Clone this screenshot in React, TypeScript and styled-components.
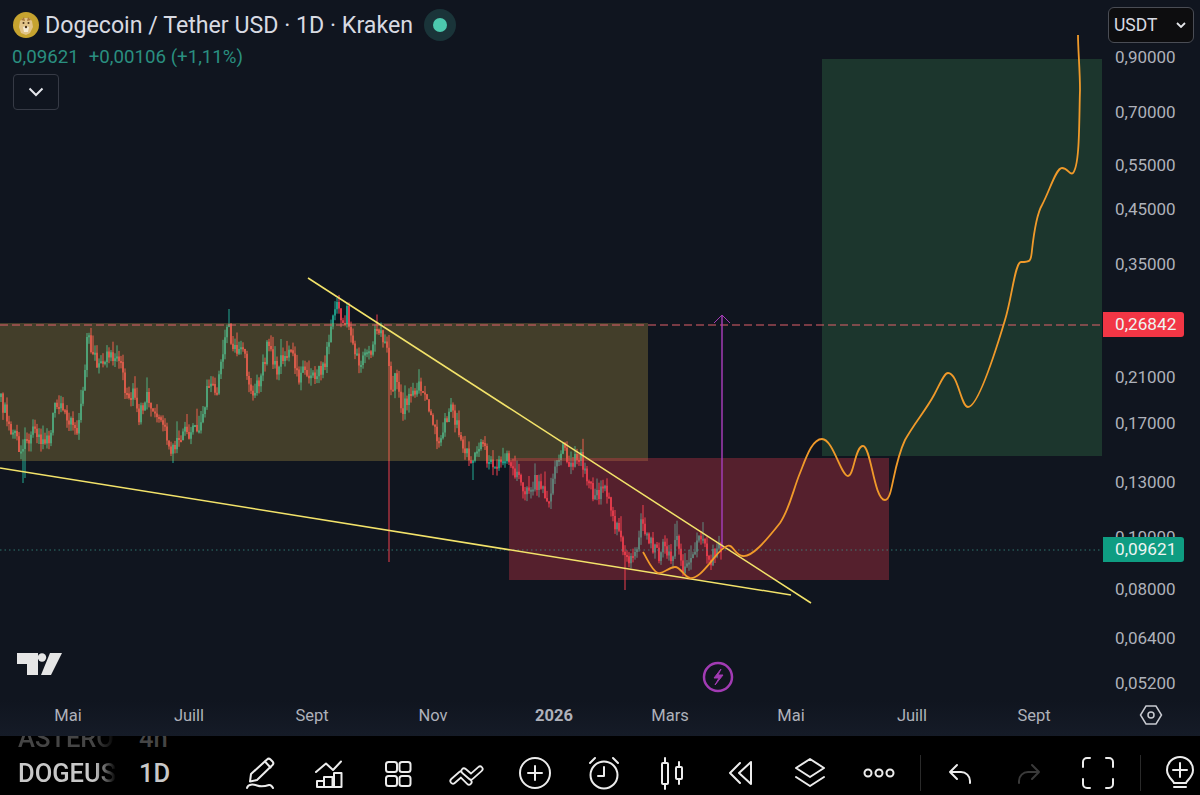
import React from 'react';
import styled, { createGlobalStyle } from 'styled-components';

const GlobalStyle = createGlobalStyle`
  html, body {
    margin: 0;
    padding: 0;
    background: #000;
    font-family: Roboto, "Liberation Sans", sans-serif;
  }
`;

const Page = styled.div`
  width: 1200px;
  height: 795px;
  display: flex;
  flex-direction: column;
  overflow: hidden;
  background: #000;
`;

const ChartArea = styled.div`
  position: relative;
  height: 736px;
  flex: none;
  display: grid;
  grid-template-columns: 1102px 98px;
  grid-template-rows: 700px 36px;
  background: #10151f;
  color: #b2b5be;
`;

const Plot = styled.svg`
  display: block;
  width: 1102px;
  height: 700px;
`;

const Legend = styled.div`
  position: absolute;
  left: 13px;
  top: 9px;
  display: flex;
  flex-direction: column;
`;

const TitleRow = styled.div`
  display: flex;
  align-items: center;
  height: 32px;
`;

const Title = styled.span`
  margin-left: 6px;
  font-size: 23.2px;
  color: #d8dae2;
  white-space: nowrap;
`;

const StatusHalo = styled.span`
  margin-left: 11px;
  width: 32px;
  height: 32px;
  border-radius: 50%;
  background: #1a3439;
  display: flex;
  align-items: center;
  justify-content: center;

  &::after {
    content: '';
    width: 14px;
    height: 14px;
    border-radius: 50%;
    background: #4cc9ae;
  }
`;

const Quote = styled.div`
  display: flex;
  gap: 10px;
  margin: 3px 0 0 -1px;
  font-size: 18.7px;
  line-height: 26px;
  color: #2a8f80;
`;

const CollapseButton = styled.div`
  width: 44px;
  height: 34px;
  margin-top: 4px;
  border: 1px solid #363a45;
  border-radius: 4px;
  display: flex;
  align-items: center;
  justify-content: center;
  color: #e4e6eb;
`;

const Brand = styled.svg`
  position: absolute;
  left: 17px;
  top: 653px;
  width: 45px;
  height: 22px;
`;

const BoltButton = styled.svg`
  position: absolute;
  left: 702px;
  top: 661px;
  width: 32px;
  height: 32px;
`;

const PriceAxis = styled.div`
  position: relative;
`;

const CurrencySelect = styled.div`
  position: absolute;
  left: 6px;
  top: 7px;
  width: 86px;
  height: 36px;
  box-sizing: border-box;
  padding: 0 7px 0 5px;
  display: flex;
  align-items: center;
  justify-content: space-between;
  background: #0d0d0f;
  border: 1px solid #4a4d55;
  border-radius: 6px;
  font-size: 17.5px;
  color: #d8dae2;
`;

const PriceTick = styled.span<{ $y: number }>`
  position: absolute;
  left: 13px;
  top: ${(p) => p.$y}px;
  transform: translateY(-50%);
  font-size: 17px;
  line-height: 20px;
  color: #aeb1ba;
`;

const PriceBadge = styled.span<{ $y: number; $bg: string }>`
  position: absolute;
  left: 1px;
  top: ${(p) => p.$y}px;
  width: 81px;
  height: 25px;
  box-sizing: border-box;
  padding-left: 12px;
  background: ${(p) => p.$bg};
  border-radius: 0 3px 3px 0;
  font-size: 17.2px;
  line-height: 24px;
  color: #eef5f2;
`;

const TimeAxis = styled.div`
  grid-column: 1 / 3;
  position: relative;
  background: linear-gradient(#10151f, #151b27);
`;

const TimeTick = styled.span<{ $x: number; $bold?: boolean }>`
  position: absolute;
  left: ${(p) => p.$x}px;
  top: 5px;
  transform: translateX(-50%);
  font-size: 16.5px;
  line-height: 21px;
  font-weight: ${(p) => (p.$bold ? 700 : 400)};
  color: #aeb1ba;
`;

const AxisSettings = styled.svg`
  position: absolute;
  left: 1139px;
  top: 3px;
  width: 24px;
  height: 24px;
`;

const Toolbar = styled.div`
  flex: 1;
  display: flex;
  align-items: flex-end;
  padding-bottom: 4px;
  min-height: 0;
  overflow: hidden;
`;

const SymbolList = styled.div`
  width: 226px;
  flex: none;
  height: 55px;
  box-sizing: border-box;
  padding: 0 0 1px 18px;
  display: flex;
  flex-direction: column;
  justify-content: flex-end;
  overflow: hidden;
`;

const SymbolRow = styled.div<{ $dim?: boolean }>`
  display: flex;
  flex: none;
  height: 35px;
  align-items: center;
  font-size: 25.5px;
  font-weight: 500;
  color: ${(p) => (p.$dim ? '#454545' : '#c8c8c8')};
`;

const SymbolName = styled.span`
  width: 98px;
  overflow: hidden;
  white-space: nowrap;
  -webkit-mask-image: linear-gradient(90deg, #000 78%, transparent);
  mask-image: linear-gradient(90deg, #000 78%, transparent);
`;

const SymbolInterval = styled.span`
  margin-left: 23px;
`;

const ToolButton = styled.div<{ $off?: boolean }>`
  width: 68.7px;
  height: 36px;
  flex: none;
  display: flex;
  align-items: center;
  justify-content: center;
  color: ${(p) => (p.$off ? '#3a3a3a' : '#ececec')};
`;

const ToolDivider = styled.div<{ $gap: number }>`
  width: 1px;
  height: 36px;
  flex: none;
  margin: 0 5px 0 ${(p) => p.$gap}px;
  background: #2a2a2a;
`;

const Glyph = styled.svg`
  display: block;
  width: 36px;
  height: 36px;
  fill: none;
  overflow: visible;
  stroke: currentColor;
  stroke-width: 2;
  stroke-linecap: round;
  stroke-linejoin: round;
`;

// candle data: closes follow the hand-read shape of the chart, noise on top
const shape: [number, number][] = [
  [0, 397], [10, 425], [20, 450], [33, 430], [40, 443], [50, 440], [53, 410], [58, 405], [67, 420], [78, 427],
  [83, 390], [87, 337], [93, 353], [100, 370], [108, 352], [113, 363], [120, 360], [127, 397], [133, 395],
  [138, 420], [147, 395], [153, 413], [163, 423], [172, 457], [177, 433], [190, 433], [203, 420], [208, 380],
  [217, 393], [223, 347], [228, 320], [233, 353], [242, 347], [253, 397], [263, 367], [267, 347], [277, 367],
  [293, 350], [298, 377], [305, 367], [313, 377], [323, 370], [333, 323], [337, 303], [342, 330], [347, 313],
  [353, 350], [360, 363], [370, 353], [375, 330], [388, 345], [390, 400], [395, 373], [403, 410], [410, 390],
  [422, 383], [430, 410], [438, 443], [452, 407], [460, 437], [472, 460], [482, 447], [493, 467], [508, 453],
  [513, 468], [527, 493], [535, 480], [550, 500], [557, 460], [562, 447], [570, 467], [580, 453], [592, 493],
  [607, 490], [613, 523], [618, 523], [623, 553], [633, 560], [642, 520], [647, 540], [660, 557], [663, 537],
  [670, 560], [677, 540], [683, 567], [700, 537], [710, 560], [718, 548], [722, 548],
];

const wickLow: Record<number, number> = { 23: 483, 25: 478, 173: 463, 389: 562, 625: 590, 473: 480 };
const wickHigh: Record<number, number> = { 229: 309, 337: 298, 389: 335, 643: 505, 563: 445, 581: 449, 87: 333 };

function closeAt(x: number) {
  for (let i = 1; i < shape.length; i++) {
    if (x <= shape[i][0]) {
      const [x0, y0] = shape[i - 1];
      const [x1, y1] = shape[i];
      return y0 + ((y1 - y0) * (x - x0)) / (x1 - x0);
    }
  }
  return 548;
}

function buildCandles() {
  let seed = 20260;
  const rnd = () => {
    seed = (seed * 1664525 + 1013904223) % 4294967296;
    return seed / 4294967296;
  };
  const up = { wick: '', body: '' };
  const down = { wick: '', body: '' };
  let prev = closeAt(0);
  for (let x = 1; x <= 721; x += 2) {
    const close = closeAt(x) + (rnd() - 0.5) * 15;
    const top = Math.min(prev, close);
    const bottom = Math.max(prev, close);
    const spike = rnd() < 0.15 ? 9 : 0;
    const high = wickHigh[x] ?? top - rnd() * 8 - spike;
    const low = wickLow[x] ?? bottom + rnd() * 8;
    const side = close < prev ? up : down;
    side.wick += `M${x} ${high.toFixed(1)}V${low.toFixed(1)}`;
    side.body += `M${x} ${top.toFixed(1)}V${Math.max(bottom, top + 2).toFixed(1)}`;
    prev = close;
  }
  return { up, down };
}

const candles = buildCandles();

const forecast =
  'M643 552C648 560 652 571 658 573C664 574 669 567 675 567C681 567 684 577 690 578C697 579 704 570 710 563C716 556 720 549 727 546C733 543 735 556 743 556C752 557 765 542 780 523C790 508 793 490 800 473C806 458 812 439 822 439C833 439 841 476 848 476C854 476 855 446 863 446C871 446 874 500 885 500C893 500 892 468 905 440C915 422 926 410 934 395C940 384 944 373 948 373C958 373 961 407 968 407C976 407 990 370 1005 320C1012 298 1015 262 1021 262C1030 262 1031 262 1032 250C1034 232 1038 212 1042 205C1050 190 1056 168 1062 168C1068 168 1070 176 1073 173C1080 165 1079 120 1080 90C1080 70 1078 50 1078 35';

const priceTicks = [
  { label: '0,90000', y: 57 },
  { label: '0,70000', y: 112 },
  { label: '0,55000', y: 165 },
  { label: '0,45000', y: 209 },
  { label: '0,35000', y: 264 },
  { label: '0,21000', y: 377 },
  { label: '0,17000', y: 423 },
  { label: '0,13000', y: 482 },
  { label: '0,10000', y: 537 },
  { label: '0,08000', y: 589 },
  { label: '0,06400', y: 638 },
  { label: '0,05200', y: 683 },
];

const timeTicks = [
  { label: 'Mai', x: 68 },
  { label: 'Juill', x: 189 },
  { label: 'Sept', x: 312 },
  { label: 'Nov', x: 433 },
  { label: '2026', x: 554, bold: true },
  { label: 'Mars', x: 670 },
  { label: 'Mai', x: 791 },
  { label: 'Juill', x: 912 },
  { label: 'Sept', x: 1034 },
];

function DogeLogo() {
  return (
    <svg width="26" height="26" viewBox="0 0 26 26">
      <circle cx="13" cy="13" r="13" fill="#c6a32f" />
      <path d="M7 9l3-3 6 0 3 3 1 6-3 6-4 2-5-2-2-6z" fill="#e2c489" />
      <path d="M8 8l3-3 1 4zM18 8l-3-3-1 4z" fill="#a97a3c" />
      <path d="M10 15l3-1 3 1-1 5-4 0z" fill="#f5ead2" />
      <circle cx="10.5" cy="11" r="1" fill="#4a3218" />
      <circle cx="15.5" cy="11" r="1" fill="#4a3218" />
      <circle cx="13" cy="15" r="1.2" fill="#4a3218" />
    </svg>
  );
}

function PencilIcon() {
  return (
    <Glyph viewBox="0 0 36 36">
      <path d="M9 19L25 4.500a2.500 2.500 0 0 1 3.500 0l2 2a2.500 2.500 0 0 1 0 3.500L15 25l-7 1.500z" />
      <path d="M23 6.500l5.500 6" />
      <path d="M5 33c1-4 6-4 10-2.500s9 .5 12-.5c2-.5 3 1 4 3" />
    </Glyph>
  );
}

function ChartIcon() {
  return (
    <Glyph viewBox="0 0 36 36">
      <path d="M5 17l10-8.500 7 6.500 8-8.500" />
      <path d="M6 26h7v6H6zM13 22h8.500v10H13zM23 18h7.500v14H23z" />
    </Glyph>
  );
}

function GridIcon() {
  return (
    <Glyph viewBox="0 0 36 36">
      <rect x="6" y="7" width="11" height="10" rx="2.5" />
      <rect x="19.500" y="7" width="11" height="10" rx="2.5" />
      <rect x="6" y="21" width="11" height="10" rx="2.5" />
      <rect x="19.500" y="21" width="11" height="10" rx="2.5" />
    </Glyph>
  );
}

function PatternIcon() {
  return (
    <svg width="36" height="36" viewBox="0 0 36 36" fill="none" strokeLinecap="round" strokeLinejoin="round">
      <path d="M5 26l8-7 8 8" stroke="#ececec" strokeWidth="7" />
      <path d="M5 26l8-7 8 8" stroke="#000" strokeWidth="3.500" />
      <path d="M16 16l7 6 9-8" stroke="#ececec" strokeWidth="7" />
      <path d="M16 16l7 6 9-8" stroke="#000" strokeWidth="3.500" />
    </svg>
  );
}

function PlusCircleIcon() {
  return (
    <Glyph viewBox="0 0 36 36">
      <circle cx="18" cy="18" r="15" />
      <path d="M18 11v14M11 18h14" />
    </Glyph>
  );
}

function AlarmIcon() {
  return (
    <Glyph viewBox="0 0 36 36">
      <circle cx="18" cy="20" r="13.500" />
      <path d="M18 12v9h-6M4 8l5-5M27 3l5 5" />
    </Glyph>
  );
}

function CandlesIcon() {
  return (
    <Glyph viewBox="0 0 36 36">
      <rect x="8" y="8" width="6" height="21" rx="1" />
      <path d="M11 3v5M11 29v5" />
      <rect x="22" y="12" width="6" height="12" rx="1" />
      <path d="M25 7v5M25 24v5" />
    </Glyph>
  );
}

function RewindIcon() {
  return (
    <Glyph viewBox="0 0 36 36">
      <path d="M17 8L7 18l10 10" />
      <path d="M28 7v22L16 18z" />
    </Glyph>
  );
}

function LayersIcon() {
  return (
    <Glyph viewBox="0 0 36 36">
      <path d="M18 4l14 9-14 9-14-9z" />
      <path d="M4 22l14 9 14-9" />
    </Glyph>
  );
}

function MoreIcon() {
  return (
    <Glyph viewBox="0 0 36 36">
      <circle cx="7" cy="18" r="3.500" />
      <circle cx="18" cy="18" r="3.500" />
      <circle cx="29" cy="18" r="3.500" />
    </Glyph>
  );
}

function UndoIcon({ flip }: { flip?: boolean }) {
  return (
    <Glyph viewBox="0 0 36 36">
      <path
        d="M15 10l-7 7 7 7M8 17h11a9 9 0 0 1 9 9v2"
        transform={flip ? 'matrix(-1 0 0 1 36 0)' : undefined}
      />
    </Glyph>
  );
}

function FullscreenIcon() {
  return (
    <Glyph viewBox="0 0 36 36">
      <path d="M10 3H7a4 4 0 0 0-4 4v5M26 3h3a4 4 0 0 1 4 4v5M10 33H7a4 4 0 0 1-4-4v-5M26 33h3a4 4 0 0 0 4-4v-5" />
    </Glyph>
  );
}

function BulbIcon() {
  return (
    <Glyph viewBox="0 0 36 36">
      <path d="M12 28c-1-3-7-6-7-13a13 13 0 0 1 26 0c0 7-6 10-7 13z" />
      <path d="M18 8v14M11 15h14M12 28h12M12 32h12" />
    </Glyph>
  );
}

export default function App() {
  return (
    <Page>
      <GlobalStyle />
      <ChartArea>
        <Plot viewBox="0 0 1102 700">
          <path d={candles.up.wick} stroke="#22ab94" strokeWidth="1" fill="none" />
          <path d={candles.up.body} stroke="#22ab94" strokeWidth="1.500" fill="none" />
          <path d={candles.down.wick} stroke="#f0404f" strokeWidth="1" fill="none" />
          <path d={candles.down.body} stroke="#f0404f" strokeWidth="1.500" fill="none" />
          <rect x="0" y="323" width="648" height="138" fill="#dcbd4b" fillOpacity="0.25" />
          <rect x="509" y="458" width="380" height="122" fill="#f63a51" fillOpacity="0.3" />
          <rect x="822" y="59" width="280" height="397" fill="#51bf6a" fillOpacity="0.2" />
          <path d="M0 325H1102" stroke="#e0606a" strokeWidth="1" strokeDasharray="8 4" />
          <path d="M0 550H1102" stroke="#3d9c90" strokeWidth="1" strokeDasharray="1.500 3" opacity="0.7" />
          <path d="M722 316V548" stroke="#a23bb4" strokeWidth="1.500" />
          <path d="M714 323l8-8 8 8" stroke="#a23bb4" strokeWidth="1" fill="none" />
          <path d="M308 278L811 603" stroke="#f3e36a" strokeWidth="1.500" />
          <path d="M0 468L791 595" stroke="#f3e36a" strokeWidth="1.500" />
          <path d={forecast} stroke="#f09a2a" strokeWidth="1.800" fill="none" />
        </Plot>

        <PriceAxis>
          <CurrencySelect>
            USDT
            <svg width="10" height="6" viewBox="0 0 10 6" fill="none" stroke="#e4e6eb" strokeWidth="1.800">
              <path d="M1 1l4 4 4-4" />
            </svg>
          </CurrencySelect>
          {priceTicks.map((tick) => (
            <PriceTick key={tick.label} $y={tick.y}>
              {tick.label}
            </PriceTick>
          ))}
          <PriceBadge $y={312} $bg="#f23645">0,26842</PriceBadge>
          <PriceBadge $y={537} $bg="#0f9d82">0,09621</PriceBadge>
        </PriceAxis>

        <TimeAxis>
          {timeTicks.map((tick) => (
            <TimeTick key={tick.x} $x={tick.x} $bold={tick.bold}>
              {tick.label}
            </TimeTick>
          ))}
          <AxisSettings viewBox="0 0 24 24" fill="none" stroke="#c8cad0" strokeWidth="1.500">
            <path d="M7 3h10l5.500 9L17 21H7L1.500 12z" />
            <circle cx="12" cy="12" r="3" />
          </AxisSettings>
        </TimeAxis>

        <Legend>
          <TitleRow>
            <DogeLogo />
            <Title>Dogecoin / Tether USD · 1D · Kraken</Title>
            <StatusHalo />
          </TitleRow>
          <Quote>
            <span>0,09621</span>
            <span>+0,00106 (+1,11%)</span>
          </Quote>
          <CollapseButton>
            <svg width="16" height="10" viewBox="0 0 16 10" fill="none" stroke="currentColor" strokeWidth="2">
              <path d="M1.500 1.500L8 8l6.500-6.500" />
            </svg>
          </CollapseButton>
        </Legend>

        <Brand viewBox="0 0 45 22" fill="#e6e6e6">
          <path d="M0 0h21v22H10V11H0z" />
          <circle cx="25" cy="4.500" r="4.200" />
          <path d="M33 0h12L34 22H24z" />
        </Brand>

        <BoltButton viewBox="0 0 32 32" fill="none" stroke="#a23bb4">
          <circle cx="16" cy="16" r="14" strokeWidth="2.500" />
          <path d="M19 8l-7 9h5l-4 7 8-10h-5z" fill="#a23bb4" strokeWidth="1" strokeLinejoin="round" />
        </BoltButton>
      </ChartArea>

      <Toolbar>
        <SymbolList>
          <SymbolRow $dim>
            <SymbolName>ASTERO</SymbolName>
            <SymbolInterval>4h</SymbolInterval>
          </SymbolRow>
          <SymbolRow>
            <SymbolName>DOGEUS</SymbolName>
            <SymbolInterval>1D</SymbolInterval>
          </SymbolRow>
        </SymbolList>
        <ToolButton><PencilIcon /></ToolButton>
        <ToolButton><ChartIcon /></ToolButton>
        <ToolButton><GridIcon /></ToolButton>
        <ToolButton><PatternIcon /></ToolButton>
        <ToolButton><PlusCircleIcon /></ToolButton>
        <ToolButton><AlarmIcon /></ToolButton>
        <ToolButton><CandlesIcon /></ToolButton>
        <ToolButton><RewindIcon /></ToolButton>
        <ToolButton><LayersIcon /></ToolButton>
        <ToolButton><MoreIcon /></ToolButton>
        <ToolDivider $gap={7} />
        <ToolButton><UndoIcon /></ToolButton>
        <ToolButton $off><UndoIcon flip /></ToolButton>
        <ToolButton><FullscreenIcon /></ToolButton>
        <ToolDivider $gap={8} />
        <ToolButton><BulbIcon /></ToolButton>
      </Toolbar>
    </Page>
  );
}
